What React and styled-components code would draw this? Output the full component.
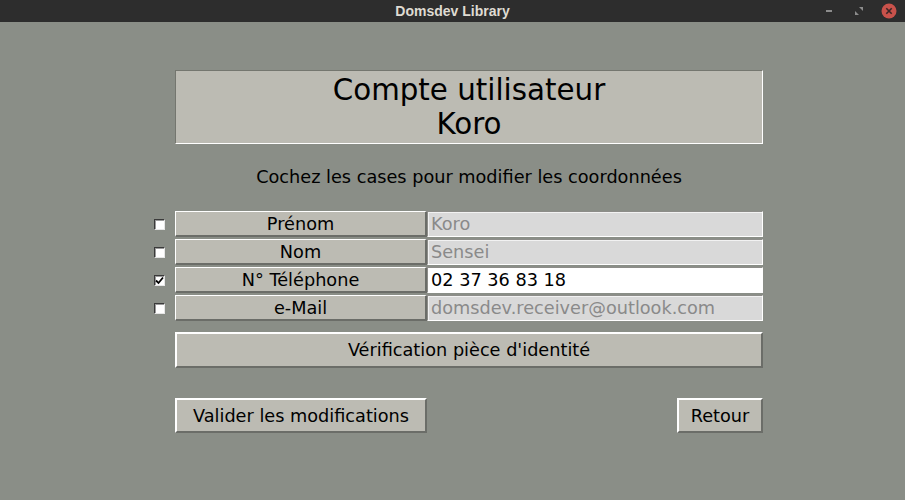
import React from "react";
import styled, { createGlobalStyle } from "styled-components";

const GlobalStyle = createGlobalStyle`
  html, body { margin: 0; padding: 0; background: #8a8e87; }
  * { box-sizing: border-box; }
`;

const Window = styled.div`
  width: 905px;
  height: 500px;
  background: #8a8e87;
  display: flex;
  flex-direction: column;
  overflow: hidden;
  font-family: "DejaVu Sans", sans-serif;
`;

const TitleBar = styled.div`
  height: 22px;
  background: #2d2d2d;
  display: grid;
  grid-template-columns: 1fr auto 1fr;
  align-items: center;
`;

const Title = styled.div`
  grid-column: 2;
  font-family: "Liberation Sans", Arial, sans-serif;
  font-weight: bold;
  font-size: 14px;
  color: #dfdbd2;
  line-height: 22px;
`;

const Controls = styled.div`
  grid-column: 3;
  display: flex;
  justify-content: flex-end;
  align-items: center;
  padding-right: 1px;
`;

const CtrlSlot = styled.div`
  width: 30px;
  height: 18px;
  display: flex;
  align-items: center;
  justify-content: center;
`;

const Form = styled.div`
  margin: 48px 0 0 154px;
  display: grid;
  grid-template-columns: 21px 252px 336px;
  row-gap: 2px;
  align-items: center;
`;

const Header = styled.div`
  grid-column: 2 / 4;
  height: 74px;
  background: #bcbbb3;
  border-style: solid;
  border-width: 1px;
  border-color: #74766f #ffffff #ffffff #74766f;
  display: flex;
  flex-direction: column;
  align-items: center;
  justify-content: center;
  font-size: 29.33px;
  line-height: 34px;
  color: #000;
  padding-bottom: 1px;
`;

const Subtitle = styled.div`
  grid-column: 2 / 4;
  height: 63px;
  display: flex;
  align-items: center;
  justify-content: center;
  font-size: 17.7px;
  color: #000;
  padding-bottom: 2px;
`;

const Check = styled.div`
  grid-column: 1;
  width: 11px;
  height: 11px;
  background: #fff;
  border-style: solid;
  border-width: 1px;
  border-color: #3a3a3a #e6e6e6 #e6e6e6 #3a3a3a;
  box-shadow: inset 1px 1px 0 #9a9a9a;
  display: flex;
  align-items: center;
  justify-content: center;
`;

const FieldLabel = styled.div`
  grid-column: 2;
  height: 26px;
  background: #bcbbb3;
  border-style: solid;
  border-width: 1px 2px 2px 1px;
  border-color: #ffffff #6b6d68 #6b6d68 #ffffff;
  display: flex;
  align-items: center;
  justify-content: center;
  font-size: 17.7px;
  color: #000;
`;

const Entry = styled.div`
  grid-column: 3;
  height: 26px;
  background: ${(p) => (p.$active ? "#ffffff" : "#d9d9d9")};
  border-style: solid;
  border-width: 1px;
  border-color: #8d8d89 #ffffff #ffffff #8d8d89;
  box-shadow: inset 1px 1px 0 ${(p) => (p.$active ? "#ffffff" : "#f2f2f2")};
  display: flex;
  align-items: center;
  padding-left: 3px;
  font-size: 17.7px;
  color: ${(p) => (p.$active ? "#000000" : "#8a8a8a")};
  white-space: nowrap;
  overflow: hidden;
`;

const Button = styled.div`
  height: ${(p) => p.$h || 35}px;
  background: #bcbbb3;
  border-style: solid;
  border-width: 2px;
  border-color: #ffffff #6b6d68 #6b6d68 #ffffff;
  box-shadow: inset 1px 1px 0 #bcbbb3;
  display: flex;
  align-items: center;
  justify-content: center;
  font-size: 17.7px;
  color: #000;
  white-space: nowrap;
`;

const WideButton = styled(Button)`
  grid-column: 2 / 4;
  margin-top: 9px;
`;

const ButtonRow = styled.div`
  grid-column: 2 / 4;
  margin-top: 28px;
  display: flex;
  justify-content: space-between;
`;

const ValidButton = styled(Button)`
  width: 252px;
`;

const BackButton = styled(Button)`
  width: 86px;
`;

const rows = [
  { label: "Prénom", value: "Koro", active: false },
  { label: "Nom", value: "Sensei", active: false },
  { label: "N° Téléphone", value: "02 37 36 83 18", active: true },
  { label: "e-Mail", value: "domsdev.receiver@outlook.com", active: false },
];

export default function App() {
  return (
    <>
      <GlobalStyle />
      <Window>
        <TitleBar>
          <Title>Domsdev Library</Title>
          <Controls>
            <CtrlSlot>
              <svg width="10" height="4" viewBox="0 0 10 4">
                <rect x="2" y="1" width="6" height="2" fill="#8c8c8c" />
              </svg>
            </CtrlSlot>
            <CtrlSlot>
              <svg width="10" height="10" viewBox="0 0 10 10">
                <path d="M5 1 L9 1 L9 5 Z" fill="#8c8c8c" />
                <path d="M1 5 L1 9 L5 9 Z" fill="#8c8c8c" />
              </svg>
            </CtrlSlot>
            <CtrlSlot>
              <svg width="16" height="16" viewBox="0 0 16 16">
                <circle cx="8" cy="8" r="7.5" fill="#c9524b" />
                <path d="M5.3 5.3 L10.7 10.7 M10.7 5.3 L5.3 10.7" stroke="#3a2626" strokeWidth="1.6" />
              </svg>
            </CtrlSlot>
          </Controls>
        </TitleBar>
        <Form>
          <Header>
            <div>Compte utilisateur</div>
            <div>Koro</div>
          </Header>
          <Subtitle>Cochez les cases pour modifier les coordonnées</Subtitle>
          {rows.map((r) => (
            <React.Fragment key={r.label}>
              <Check>
                {r.active && (
                  <svg width="9" height="9" viewBox="0 0 9 9">
                    <path d="M1 4.5 L3.5 7 L8 1.5" stroke="#000" strokeWidth="1.8" fill="none" />
                  </svg>
                )}
              </Check>
              <FieldLabel>{r.label}</FieldLabel>
              <Entry $active={r.active}>{r.value}</Entry>
            </React.Fragment>
          ))}
          <WideButton $h={36}>Vérification pièce d'identité</WideButton>
          <ButtonRow>
            <ValidButton>Valider les modifications</ValidButton>
            <BackButton>Retour</BackButton>
          </ButtonRow>
        </Form>
      </Window>
    </>
  );
}
